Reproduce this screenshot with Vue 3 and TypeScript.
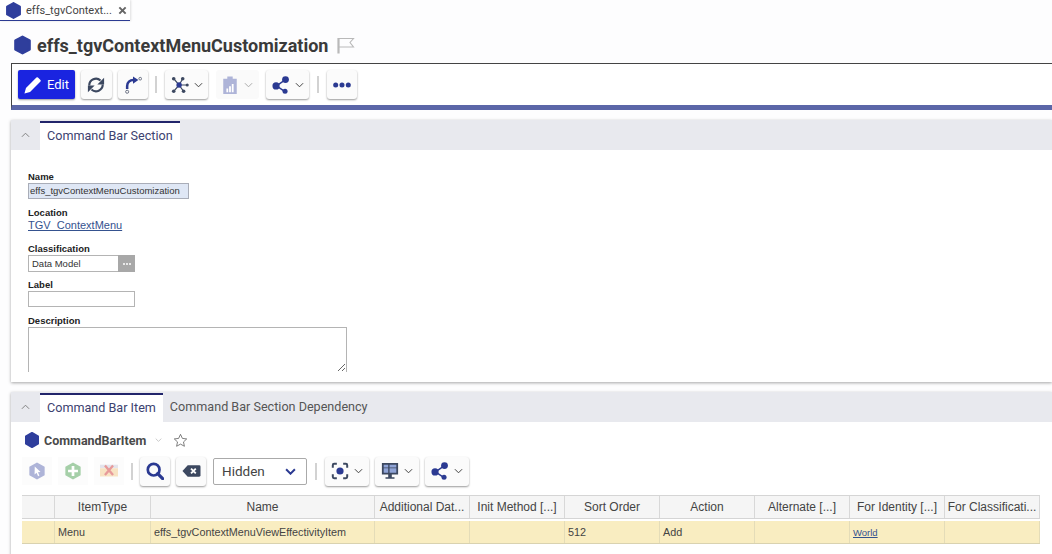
<template>
  <div class="page">
    <!-- open tabs -->
    <div class="tabstrip">
      <div class="doc-tab">
        <svg class="hex hex-sm" viewBox="0 0 16 16"><path :d="hexPath" /></svg>
        <span class="doc-tab-label">effs_tgvContext...</span>
        <svg class="close" viewBox="0 0 10 10"><path d="M1.5 1.5l7 7M8.5 1.5l-7 7" /></svg>
      </div>
    </div>

    <div class="title-row">
      <svg class="hex hex-lg" viewBox="0 0 16 16"><path :d="hexPath" /></svg>
      <h1>effs_tgvContextMenuCustomization</h1>
      <svg class="flag" viewBox="0 0 18 17"><path class="pole" d="M1.500 1v15.500" /><path d="M1.500 1.500h15l-3.500 4 3.500 4.500h-15" /></svg>
    </div>

    <div class="toolbar">
      <button class="btn-edit">
        <svg viewBox="0 0 20 20"><path d="M.5 19.500l1.700-6.200L13.800 1.700a1.200 1.200 0 0 1 1.700 0l2.800 2.800a1.200 1.200 0 0 1 0 1.700L6.700 17.800z" fill="#fff" /></svg>
        Edit
      </button>
      <button class="tbtn sq">
        <svg viewBox="0 0 20 20" class="i20 refresh">
          <path d="M2.500 10.500A7.500 7.500 0 0 1 15 5M17.500 9.500A7.500 7.500 0 0 1 5 15" />
          <path class="solid" d="M19 2v7.500h-7.500zM1 18v-7.500h7.500z" />
        </svg>
      </button>
      <button class="tbtn sq">
        <svg viewBox="0 0 20 20" class="i20 fork">
          <path d="M3.500 14.500V11c0-4 3-6.500 7-6.500" />
          <path class="solid" d="M10 .5l6 4-6 4z" />
          <circle cx="3.500" cy="17.500" r="1.700" />
          <circle cx="18" cy="3" r="1.500" />
        </svg>
      </button>
      <span class="sep"></span>
      <button class="tbtn wide">
        <svg viewBox="0 0 20 20" class="i20">
          <path class="web" d="M9 10L3 3M9 10l-6 7M9 10l5 7M9 10l4-7M9 10h9" />
          <circle cx="9" cy="10" r="3" />
          <circle class="node" cx="3" cy="3" r="2" />
          <circle class="node" cx="3" cy="17" r="2" />
          <circle class="node" cx="13" cy="3" r="2" />
          <circle class="node" cx="14" cy="17" r="2" />
          <circle class="node" cx="18" cy="10" r="1.700" />
        </svg>
        <svg class="chev" viewBox="0 0 10 6"><path d="M1 1l4 4 4-4" /></svg>
      </button>
      <button class="tbtn wide off">
        <svg viewBox="0 0 20 20" class="i20">
          <path fill="#aeb4d8" d="M2.500 3h15v17h-15zM7 .5h6V5H7z" />
          <path fill="#fff" d="M6 14h2v4H6zM9 11.500h2V18H9zM12 9h2v9h-2z" />
        </svg>
        <svg class="chev" viewBox="0 0 10 6"><path d="M1 1l4 4 4-4" /></svg>
      </button>
      <button class="tbtn wide">
        <svg viewBox="0 0 20 20" class="i20"><path class="web2" d="M5 11l10-7M5 11l9 6" /><circle cx="4.500" cy="11" r="4" /><circle cx="15" cy="4" r="3.800" /><circle cx="14.500" cy="17" r="2.800" /></svg>
        <svg class="chev" viewBox="0 0 10 6"><path d="M1 1l4 4 4-4" /></svg>
      </button>
      <span class="sep"></span>
      <button class="tbtn sq">
        <svg viewBox="0 0 20 20" class="i20"><circle cx="3" cy="10" r="2.800" /><circle cx="10" cy="10" r="2.800" /><circle cx="17" cy="10" r="2.800" /></svg>
      </button>
    </div>

    <section class="panel form-panel">
      <div class="panel-head">
        <span class="collapse"><svg viewBox="0 0 10 6"><path d="M1 5l4-4 4 4" /></svg></span>
        <span class="ptab active">Command Bar Section</span>
      </div>
      <div class="form">
        <label>Name</label>
        <div class="input name-input">effs_tgvContextMenuCustomization</div>
        <label>Location</label>
        <a class="loc-link">TGV_ContextMenu</a>
        <label>Classification</label>
        <div class="input class-input">
          <span class="val">Data Model</span>
          <span class="pick"><i></i><i></i><i></i></span>
        </div>
        <label>Label</label>
        <div class="input label-input"></div>
        <label>Description</label>
        <textarea class="descr" readonly></textarea>
      </div>
    </section>

    <section class="panel grid-panel">
      <div class="panel-head">
        <span class="collapse"><svg viewBox="0 0 10 6"><path d="M1 5l4-4 4 4" /></svg></span>
        <span class="ptab active">Command Bar Item</span>
        <span class="ptab">Command Bar Section Dependency</span>
      </div>

      <div class="grid-title">
        <svg class="hex hex-md" viewBox="0 0 16 16"><path :d="hexPath" /></svg>
        <span class="grid-name">CommandBarItem</span>
        <svg class="chev title-chev" viewBox="0 0 10 6"><path d="M1 1l4 4 4-4" /></svg>
        <svg class="star" viewBox="0 0 20 20"><path d="M10 1.800l2.500 5.400 5.800.7-4.300 4 1.200 5.800-5.200-2.900-5.200 2.900 1.200-5.800-4.300-4 5.800-.7z" /></svg>
      </div>

      <div class="grid-tools">
        <span class="ghost">
          <svg viewBox="0 0 20 20" class="i20">
            <path fill="#aeb4d8" :d="bigHex" />
            <path fill="#fff" d="M7.500 5l6.500 6-3 .3 1.700 3.700-1.500.7-1.700-3.700-2.200 2z" />
          </svg>
        </span>
        <span class="ghost">
          <svg viewBox="0 0 20 20" class="i20">
            <path fill="#a5cfa8" :d="bigHex" />
            <path fill="#fff" d="M8.500 4.500h3v4h4v3h-4v4h-3v-4h-4v-3h4z" />
          </svg>
        </span>
        <span class="ghost">
          <svg viewBox="0 0 20 20" class="i20 del">
            <path fill="#e4e4ec" d="M0 3h20v4H0z" />
            <path fill="#f8e3c3" d="M0 7h20v4H0zM0 11h20v5H0z" />
            <path stroke="#e79a9a" stroke-width="2.600" fill="none" d="M5.500 4l9 10.500M14.500 4l-9 10.500" />
          </svg>
        </span>
        <span class="sep"></span>
        <button class="tbtn sq2">
          <svg viewBox="0 0 20 20" class="i20 search"><circle cx="8.500" cy="8.500" r="6.500" /><path d="M13 13l5.500 5.500" /></svg>
        </button>
        <button class="tbtn sq2">
          <svg viewBox="0 0 20 14" class="i20 back">
            <path d="M6 1h12a1.500 1.500 0 0 1 1.500 1.500v9A1.500 1.500 0 0 1 18 13H6L.5 7z" />
            <path d="M9.500 4.500l5 5M14.500 4.500l-5 5" stroke="#fff" stroke-width="2" fill="none" />
          </svg>
        </button>
        <div class="select">
          <span>Hidden</span>
          <svg viewBox="0 0 10 6"><path d="M1 1l4 4 4-4" /></svg>
        </div>
        <span class="sep"></span>
        <button class="tbtn wide2">
          <svg viewBox="0 0 20 20" class="i20 capture"><path d="M6.500 2H3.500A1.500 1.500 0 0 0 2 3.500V6.500M13.500 2h3A1.500 1.500 0 0 1 18 3.500V6.500M6.500 18H3.500A1.500 1.500 0 0 1 2 16.500V13.500M13.500 18h3a1.500 1.500 0 0 0 1.500-1.500V13.500" /><circle class="solid" cx="10" cy="10" r="4" /></svg>
          <svg class="chev" viewBox="0 0 10 6"><path d="M1 1l4 4 4-4" /></svg>
        </button>
        <button class="tbtn wide2">
          <svg viewBox="0 0 20 20" class="i20">
            <path class="monitor" d="M1 1h18v13H1zM8 14h4v3h3v1.500H5V17h3z" />
            <path fill="#8fa3d6" d="M3 3h5v3H3zM3 7h5v5H3zM9.500 3H17v3H9.500zM9.500 7H17v5H9.500z" />
          </svg>
          <svg class="chev" viewBox="0 0 10 6"><path d="M1 1l4 4 4-4" /></svg>
        </button>
        <button class="tbtn wide2">
          <svg viewBox="0 0 20 20" class="i20"><path class="web2" d="M5 11l10-7M5 11l9 6" /><circle cx="4.500" cy="11" r="4" /><circle cx="15" cy="4" r="3.800" /><circle cx="14.500" cy="17" r="2.800" /></svg>
          <svg class="chev" viewBox="0 0 10 6"><path d="M1 1l4 4 4-4" /></svg>
        </button>
      </div>

      <div class="table">
        <div class="row head">
          <div v-for="c in columns" :key="c.title" class="cell" :style="{ width: c.width + 'px' }">{{ c.title }}</div>
        </div>
        <div class="row body">
          <div v-for="c in columns" :key="c.title" class="cell" :style="{ width: c.width + 'px' }">
            <a v-if="c.link" class="world">{{ c.value }}</a>
            <template v-else>{{ c.value }}</template>
          </div>
        </div>
      </div>
    </section>
  </div>
</template>

<script setup lang="ts">
interface Column {
  title: string;
  width: number;
  value: string;
  link?: boolean;
}

const hexPath = 'M8 1l6 3.300v7.400L8 15l-6-3.300V4.300z';
const bigHex = 'M10 .5l8.500 4.700v9.600L10 19.500l-8.500-4.700V5.200z';

const columns: Column[] = [
  { title: '', width: 33, value: '' },
  { title: 'ItemType', width: 96, value: 'Menu' },
  { title: 'Name', width: 224, value: 'effs_tgvContextMenuViewEffectivityItem' },
  { title: 'Additional Dat...', width: 95, value: '' },
  { title: 'Init Method [...]', width: 95, value: '' },
  { title: 'Sort Order', width: 95, value: '512' },
  { title: 'Action', width: 95, value: 'Add' },
  { title: 'Alternate [...]', width: 95, value: '' },
  { title: 'For Identity [...]', width: 95, value: 'World', link: true },
  { title: 'For Classificati...', width: 95, value: '' }
];
</script>

<style>
html,
body {
  margin: 0;
  background: #fdfdfe;
  overflow: hidden;
}
</style>

<style scoped>
.page {
  width: 1052px;
  height: 554px;
  overflow: hidden;
  font-family: Roboto, "Liberation Sans", sans-serif;
  color: #333;
  background: #fdfdfe;
}

svg {
  fill: #2b3a92;
  flex: none;
}

button {
  font-family: inherit;
  padding: 0;
}

.hex {
  stroke: #2f3e9c;
  stroke-width: 2;
  stroke-linejoin: round;
  fill: #2f3e9c;
}

/* tab strip */
.tabstrip {
  height: 21px;
}

.doc-tab {
  width: 130px;
  height: 21px;
  display: flex;
  align-items: center;
  background: #fff;
  border-bottom: 1px solid #2b3a92;
  box-shadow: 1px 0 2px rgba(0, 0, 0, 0.12);
  padding-left: 5px;
  box-sizing: border-box;
}

.hex-sm {
  width: 17px;
  height: 17px;
}

.doc-tab-label {
  margin-left: 4px;
  font-size: 11px;
  color: #444;
  white-space: nowrap;
}

.close {
  width: 9px;
  height: 9px;
  margin-left: 6px;
  fill: none;
  stroke: #666;
  stroke-width: 2.200;
}

/* title */
.title-row {
  box-sizing: border-box;
  height: 42px;
  padding: 6px 0 0 13px;
  display: flex;
  align-items: center;
}

.hex-lg {
  width: 19px;
  height: 20px;
}

h1 {
  margin: 0 0 0 5px;
  font-size: 18px;
  font-weight: 700;
  color: #3a3a3a;
  white-space: nowrap;
}

.flag {
  width: 18px;
  height: 17px;
  margin-left: 9px;
  fill: none;
  stroke: #b9b9b9;
  stroke-width: 1.100;
}

.flag .pole {
  stroke-width: 2.200;
}

/* toolbar */
.toolbar {
  margin-left: 11px;
  height: 41px;
  border-top: 1px solid #444;
  border-left: 1px solid #444;
  border-bottom: 5px solid #5b66a8;
  display: flex;
  align-items: center;
  gap: 6px;
  padding-left: 6px;
  background: #fff;
}

.btn-edit {
  width: 57px;
  height: 29px;
  border: none;
  border-radius: 2px;
  background: #1a24e0;
  color: #fff;
  font-size: 13px;
  font-weight: 400;
  display: flex;
  align-items: center;
  gap: 5px;
  padding-left: 6px;
  box-shadow: 0 1px 2px rgba(0, 0, 0, 0.4);
}

.btn-edit svg {
  width: 18px;
  height: 18px;
}

.tbtn {
  height: 29px;
  border: none;
  background: #fbfbfb;
  border-radius: 3px;
  box-shadow: 0 1px 2px rgba(0, 0, 0, 0.4);
  display: flex;
  align-items: center;
  justify-content: center;
  gap: 5px;
}

.sq {
  width: 30.500px;
}

.wide {
  width: 43px;
  margin-right: 1.500px;
}

.off {
  box-shadow: none;
  background: #fafafa;
}

.off .chev {
  stroke: #aaa;
}

.i20 {
  width: 18px;
  height: 18px;
}

.refresh {
  fill: none;
  stroke: #3c4860;
  stroke-width: 2.400;
}

.refresh .solid {
  fill: #3c4860;
  stroke: none;
}

.fork {
  fill: none;
  stroke: #2b3a92;
  stroke-width: 2.800;
}

.fork .solid {
  fill: #2b3a92;
  stroke: none;
}

.fork circle {
  stroke: #6a7184;
  stroke-width: 1.100;
}

.web {
  fill: none;
  stroke: #3c4860;
  stroke-width: 1.300;
}

.node {
  fill: #3c4860;
}

.web2 {
  fill: none;
  stroke: #2b3a92;
  stroke-width: 1.600;
}

.search {
  fill: none;
  stroke: #2b3a92;
  stroke-width: 3;
}

.search path {
  stroke-width: 3.600;
  stroke-linecap: round;
}

.back {
  fill: #3c4860;
}

.capture {
  fill: none;
  stroke: #3c4860;
  stroke-width: 2.200;
}

.capture .solid {
  fill: #2b3a92;
  stroke: none;
}

.monitor {
  fill: #3c4860;
}

.chev {
  width: 9px;
  height: 6px;
  fill: none;
  stroke: #444;
  stroke-width: 1.100;
}

.sep {
  width: 2px;
  height: 17px;
  background: #d2d2d2;
  margin: 0 2px 0 1px;
}

.wide + .sep {
  margin-left: 0;
}

.ghost + .sep {
  margin-right: 1px;
}

/* panels */
.panel {
  margin-left: 11px;
  background: #fff;
  box-shadow: 0 1px 3px rgba(0, 0, 0, 0.35);
}

.form-panel {
  margin-top: 10px;
  height: 262px;
}

.grid-panel {
  margin-top: 10px;
  height: 170px;
}

.panel-head {
  height: 30px;
  background: #e8e9ee;
  display: flex;
}

.collapse {
  width: 29px;
  display: flex;
  align-items: center;
  justify-content: center;
}

.collapse svg {
  width: 9px;
  height: 6px;
  fill: none;
  stroke: #777;
  stroke-width: 1;
}

.ptab {
  padding: 0 7px;
  line-height: 30px;
  font-size: 12.600px;
  color: #555;
  white-space: nowrap;
}

.ptab.active {
  background: #fff;
  color: #3c4270;
  margin-top: 1px;
  border-top: 2px solid #22256b;
  line-height: 25px;
}

/* form */
.form {
  padding: 21px 17px 0;
  display: flex;
  flex-direction: column;
  align-items: flex-start;
}

.form label {
  font-size: 9.500px;
  font-weight: 700;
  color: #222;
  line-height: 11px;
  margin-bottom: 1px;
  font-family: "Liberation Sans", sans-serif;
}

.input {
  box-sizing: border-box;
  border: 1px solid #b4b4b4;
  height: 16px;
  font-size: 9.500px;
  line-height: 14px;
  color: #333;
  margin-bottom: 8px;
  background: #fff;
  font-family: "Liberation Sans", sans-serif;
}

.name-input {
  width: 161px;
  padding-left: 1px;
  background: #dfe7f5;
  border-color: #a9adb8;
}

.loc-link {
  font-size: 11px;
  line-height: 13px;
  color: #35528f;
  text-decoration: underline;
  margin-bottom: 11px;
  font-family: "Liberation Sans", sans-serif;
}

.class-input {
  width: 107px;
  height: 17px;
  display: flex;
  justify-content: space-between;
  margin-bottom: 7px;
}

.val {
  padding-left: 3px;
  line-height: 15px;
}

.pick {
  width: 17px;
  margin: -1px -1px -1px 0;
  background: #a8a8a8;
  display: flex;
  align-items: center;
  justify-content: center;
  gap: 1px;
}

.pick i {
  width: 2px;
  height: 2px;
  border-radius: 50%;
  background: #fff;
}

.label-input {
  width: 107px;
}

.descr {
  box-sizing: border-box;
  width: 319px;
  height: 45px;
  margin: 0;
  border: 1px solid #b4b4b4;
  border-bottom: none;
  border-radius: 0;
  outline: none;
}

/* grid section */
.grid-title {
  box-sizing: border-box;
  height: 34px;
  padding: 2px 0 0 13px;
  display: flex;
  align-items: center;
}

.hex-md {
  width: 16px;
  height: 16px;
}

.grid-name {
  margin-left: 4px;
  font-size: 12.500px;
  font-weight: 700;
  color: #4a4a4a;
}

.title-chev {
  width: 7px;
  margin-left: 9px;
  stroke: #bbb;
}

.star {
  width: 15px;
  height: 15px;
  margin-left: 11px;
  fill: none;
  stroke: #555;
  stroke-width: 1;
}

.grid-tools {
  height: 30px;
  display: flex;
  align-items: center;
  gap: 6px;
  padding-left: 11px;
}

.ghost {
  width: 30px;
  height: 28px;
  display: flex;
  align-items: center;
  justify-content: center;
  background: #fcfcfc;
}

.del {
  width: 20px;
}

.sq2 {
  width: 30px;
}

.back {
  width: 19px;
}

.wide2 {
  width: 44px;
}

.select {
  width: 94px;
  height: 27px;
  box-sizing: border-box;
  border: 1px solid #aaa;
  border-radius: 2px;
  display: flex;
  align-items: center;
  justify-content: space-between;
  padding: 0 10px 0 8px;
  font-size: 13.500px;
  color: #444;
  margin-left: 1px;
}

.select svg {
  width: 11px;
  height: 7px;
  fill: none;
  stroke: #2b3a92;
  stroke-width: 1.800;
}

.select + .sep {
  margin: 0 2px;
}

.table {
  margin: 9px 0 0 11px;
  font-family: "Liberation Sans", sans-serif;
  font-size: 12px;
  width: 1018px;
}

.row {
  display: flex;
  box-sizing: border-box;
}

.cell {
  box-sizing: border-box;
  flex: none;
  white-space: nowrap;
  overflow: hidden;
  border-right: 1px solid #d8d8d8;
}

.head {
  height: 24px;
  background: #f5f5f5;
  border-top: 1px solid #d5d5d5;
  border-bottom: 1px solid #d5d5d5;
  margin-bottom: 2px;
}

.head .cell {
  line-height: 22px;
  text-align: center;
  color: #444;
}

.body {
  height: 23px;
  background: #f9edc1;
  border-bottom: 1px solid #d9d2b0;
}

.body .cell {
  line-height: 22px;
  padding-left: 3px;
  color: #444;
  font-size: 10.800px;
  border-right-color: #e4dcb8;
}

.world {
  font-size: 9.500px;
  color: #35528f;
  text-decoration: underline;
}
</style>
